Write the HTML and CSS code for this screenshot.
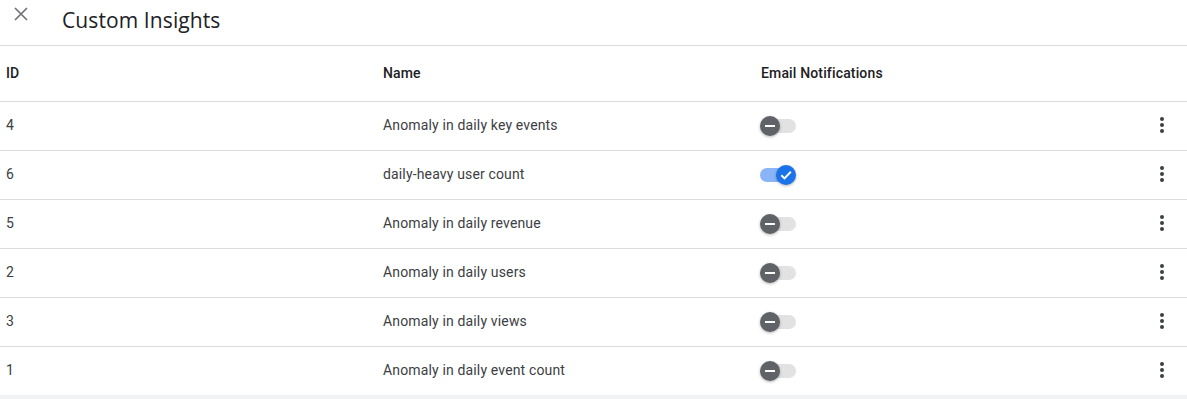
FILE: index.html
```html
<!DOCTYPE html>
<html>
<head>
<meta charset="utf-8">
<link rel="stylesheet" href="styles.css">
</head>
<body>
<div class="page">
  <header class="topbar">
    <button class="close" aria-label="Close">
      <svg width="14" height="14" viewBox="0 0 14 14"><path d="M1 1L13 13M13 1L1 13" stroke="#6f7378" stroke-width="1.7" fill="none"/></svg>
    </button>
    <h1 class="title">Custom Insights</h1>
  </header>
  <div class="table">
    <div class="row head">
      <div class="cell">ID</div>
      <div class="cell">Name</div>
      <div class="cell">Email Notifications</div>
      <div class="cell"></div>
    </div>
    <div class="row">
      <div class="cell">4</div>
      <div class="cell">Anomaly in daily key events</div>
      <div class="cell"><span class="toggle off"><span class="track"></span><span class="thumb"><span class="minus"></span></span></span></div>
      <div class="cell act"><span class="kebab"><i></i><i></i><i></i></span></div>
    </div>
    <div class="row">
      <div class="cell">6</div>
      <div class="cell">daily-heavy user count</div>
      <div class="cell"><span class="toggle on"><span class="track"></span><span class="thumb"><svg width="14" height="14" viewBox="0 0 14 14"><path d="M2.3 7.3L5.5 10.4L11.8 3.8" stroke="#fff" stroke-width="2" fill="none"/></svg></span></span></div>
      <div class="cell act"><span class="kebab"><i></i><i></i><i></i></span></div>
    </div>
    <div class="row">
      <div class="cell">5</div>
      <div class="cell">Anomaly in daily revenue</div>
      <div class="cell"><span class="toggle off"><span class="track"></span><span class="thumb"><span class="minus"></span></span></span></div>
      <div class="cell act"><span class="kebab"><i></i><i></i><i></i></span></div>
    </div>
    <div class="row">
      <div class="cell">2</div>
      <div class="cell">Anomaly in daily users</div>
      <div class="cell"><span class="toggle off"><span class="track"></span><span class="thumb"><span class="minus"></span></span></span></div>
      <div class="cell act"><span class="kebab"><i></i><i></i><i></i></span></div>
    </div>
    <div class="row">
      <div class="cell">3</div>
      <div class="cell">Anomaly in daily views</div>
      <div class="cell"><span class="toggle off"><span class="track"></span><span class="thumb"><span class="minus"></span></span></span></div>
      <div class="cell act"><span class="kebab"><i></i><i></i><i></i></span></div>
    </div>
    <div class="row last">
      <div class="cell">1</div>
      <div class="cell">Anomaly in daily event count</div>
      <div class="cell"><span class="toggle off"><span class="track"></span><span class="thumb"><span class="minus"></span></span></span></div>
      <div class="cell act"><span class="kebab"><i></i><i></i><i></i></span></div>
    </div>
  </div>
</div>
</body>
</html>
```
FILE: styles.css
```css
html, body {
  margin: 0;
  padding: 0;
  background: #f1f3f4;
  font-family: Roboto, "Liberation Sans", sans-serif;
}
.page {
  background: #fff;
}
.topbar {
  height: 45px;
  border-bottom: 1px solid #dadce0;
  display: flex;
  align-items: flex-start;
  box-sizing: content-box;
}
.close {
  border: 0;
  background: none;
  padding: 0;
  margin: 7px 0 0 14px;
  width: 14px;
  height: 14px;
  display: block;
  cursor: pointer;
}
.close svg { display: block; }
.title {
  margin: 5px 0 0 34px;
  font-family: "Open Sans", Roboto, sans-serif;
  font-weight: 400;
  font-size: 21px;
  line-height: 30px;
  color: #202124;
  letter-spacing: 0.1px;
}
.row {
  display: grid;
  grid-template-columns: 377px 378px 1fr 32px;
  height: 48px;
  border-bottom: 1px solid #dadce0;
  align-items: center;
  font-size: 14px;
  color: #3c4043;
  letter-spacing: 0.15px;
}
.row.head {
  height: 55px;
  font-weight: 500;
  color: #202124;
}
.row.last {
  border-bottom: 0;
}
.cell {
  padding-left: 6px;
  padding-bottom: 2px;
  display: flex;
  align-items: center;
}
.cell.act {
  padding-left: 0;
  justify-content: flex-start;
}
.toggle {
  position: relative;
  width: 36px;
  height: 20px;
  margin-left: -1px;
  margin-top: 1px;
  display: block;
}
.track {
  position: absolute;
  top: 3px;
  height: 14px;
  width: 34px;
  border-radius: 7px;
}
.toggle.off .track { left: 2px; background: #e2e2e2; }
.toggle.on .track { left: 0; background: #8ab4f8; }
.thumb {
  position: absolute;
  top: 0;
  width: 20px;
  height: 20px;
  border-radius: 50%;
  display: flex;
  align-items: center;
  justify-content: center;
  box-shadow: 0 1px 3px rgba(0,0,0,0.3);
}
.toggle.off .thumb { left: 0; background: #5f6368; }
.toggle.on .thumb { left: 16px; background: #1a73e8; }
.minus {
  width: 10px;
  height: 2px;
  background: #fff;
  display: block;
}
.thumb svg { display: block; }
.kebab {
  display: flex;
  flex-direction: column;
  gap: 2px;
  margin-left: 5px;
}
.kebab i {
  display: block;
  width: 4px;
  height: 4px;
  border-radius: 50%;
  background: #3c4043;
}
```
